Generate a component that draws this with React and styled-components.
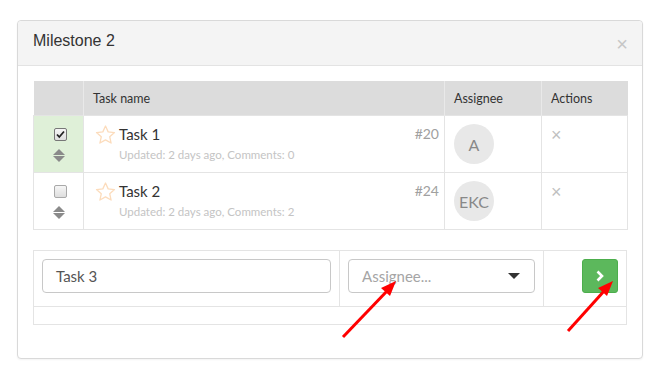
import React from 'react';
import styled, { createGlobalStyle } from 'styled-components';

const GlobalStyle = createGlobalStyle`
  body {
    margin: 0;
    background: #fff;
    font-family: Lato, "Open Sans", sans-serif;
    color: #333;
  }
`;

const Page = styled.div`
  position: relative;
  width: 661px;
  height: 386px;
  padding: 20px 0 0 17px;
  box-sizing: border-box;
`;

const Modal = styled.div`
  width: 626px;
  height: 339px;
  box-sizing: border-box;
  border: 1px solid #d9d9d9;
  border-radius: 4px;
  background: #fff;
  box-shadow: 0 1px 2px rgba(0, 0, 0, 0.05);
`;

const Header = styled.div`
  height: 45px;
  box-sizing: border-box;
  background: #f4f4f4;
  border-bottom: 1px solid #e3e3e3;
  border-radius: 4px 4px 0 0;
  display: flex;
  align-items: flex-start;
  justify-content: space-between;
  padding: 9px 14px 0 15px;
`;

const Title = styled.h4`
  margin: 0;
  font-family: "Liberation Sans", Arial, sans-serif;
  font-weight: normal;
  font-size: 16px;
  line-height: 22px;
  color: #333;
`;

const Close = styled.span`
  font-family: "Liberation Sans", Arial, sans-serif;
  font-size: 20px;
  line-height: 20px;
  margin-top: 4px;
  color: #c6c6c6;
`;

const Body = styled.div`
  padding: 15px 15px 0 15px;
`;

const Table = styled.table`
  width: 594px;
  table-layout: fixed;
  border-collapse: collapse;
  font-size: 12px;

  th {
    background: #dcdcdc;
    text-align: left;
    font-weight: normal;
    font-size: 12.5px;
    color: #333;
    height: 34px;
    padding: 0 9px;
    border-left: 1px solid #e9e9e9;
  }
  th:first-child {
    border-left: none;
  }
  td {
    border: 1px solid #e4e4e4;
    vertical-align: top;
    height: 57px;
    box-sizing: border-box;
  }
`;

const CheckCell = styled.td`
  background: ${(p) => (p.$done ? '#dff0d8' : '#fff')};
  padding-top: 12px;
`;

const Check = styled.div`
  width: 11px;
  height: 11px;
  margin-left: 19px;
  border: 1px solid ${(p) => (p.$on ? '#777' : '#a9a9a9')};
  border-radius: 2px;
  background: linear-gradient(#f6f6f6, #dedede);
  display: flex;
  align-items: center;
  justify-content: center;
`;

const Sorter = styled.div`
  display: flex;
  flex-direction: column;
  align-items: center;
  gap: 1px;
  margin-top: 8px;
`;

const NameCell = styled.td`
  padding: 8px 5px 0 10px;
`;

const NameRow = styled.div`
  display: flex;
  align-items: flex-start;
`;

const TaskInfo = styled.div`
  margin-left: 2px;
  flex: 1;
`;

const TaskTitle = styled.div`
  font-size: 15px;
  line-height: 18px;
  margin-top: 1px;
  color: #333;
`;

const Meta = styled.div`
  font-size: 11.5px;
  color: #c4c4c4;
  margin-top: 5px;
`;

const Num = styled.span`
  font-size: 14px;
  color: #a0a0a0;
  line-height: 16px;
  margin-top: 2px;
`;

const AssigneeCell = styled.td`
  padding: 8px 0 0 9px;
`;

const Avatar = styled.div`
  width: 40px;
  height: 40px;
  border-radius: 50%;
  background: #e8e8e8;
  color: #888;
  font-size: 16px;
  display: flex;
  align-items: center;
  justify-content: center;
`;

const ActionCell = styled.td`
  padding: 9px 0 0 9px;
`;

const Remove = styled.span`
  font-family: "Liberation Sans", Arial, sans-serif;
  font-size: 18px;
  color: #c0c0c0;
`;

const Form = styled.div`
  margin-top: 20px;
  width: 594px;
  border: 1px solid #e4e4e4;
  box-sizing: border-box;
`;

const FormRow = styled.div`
  display: grid;
  grid-template-columns: 305px 204px 1fr;
  height: 55px;
  border-bottom: 1px solid #e4e4e4;
`;

const FormCell = styled.div`
  display: flex;
  align-items: flex-start;
  padding: 8px 8px 0;
  border-left: ${(p) => (p.$first ? 'none' : '1px solid #e4e4e4')};
  justify-content: ${(p) => (p.$end ? 'flex-end' : 'flex-start')};
`;

const FormFoot = styled.div`
  height: 17px;
`;

const TextInput = styled.div`
  width: 100%;
  height: 34px;
  box-sizing: border-box;
  border: 1px solid #c8c8c8;
  border-radius: 4px;
  padding: 0 13px;
  display: flex;
  align-items: center;
  font-size: 15px;
  color: #555;
`;

const Select = styled(TextInput)`
  justify-content: space-between;
  color: #a5a5a5;
  padding: 0 14px 0 13px;
`;

const GoButton = styled.div`
  width: 36px;
  height: 34px;
  border-radius: 3px;
  background: #5cb85c;
  border: 1px solid #4cae4c;
  box-sizing: border-box;
  display: flex;
  align-items: center;
  justify-content: center;
`;

const Arrows = styled.svg`
  position: absolute;
  left: 0;
  top: 0;
  pointer-events: none;
`;

const Star = () => (
  <svg width="23" height="22" viewBox="0 0 24 24" style={{ flexShrink: 0 }}>
    <path
      d="M12 2.2l2.9 6.4 6.9.7-5.2 4.6 1.5 6.9L12 17.3l-6.1 3.5 1.5-6.9-5.2-4.6 6.9-.7z"
      fill="none"
      stroke="#fcdcbc"
      strokeWidth="1.4"
      strokeLinejoin="round"
    />
  </svg>
);

const SortIcon = () => (
  <>
    <svg width="12" height="6" viewBox="0 0 12 6">
      <path d="M6 0L12 6H0z" fill="#8a8a8a" />
    </svg>
    <svg width="12" height="6" viewBox="0 0 12 6">
      <path d="M0 0h12L6 6z" fill="#8a8a8a" />
    </svg>
  </>
);

const tasks = [
  { id: 20, name: 'Task 1', done: true, comments: 0, who: 'A' },
  { id: 24, name: 'Task 2', done: false, comments: 2, who: 'EKC' },
];

export default function App() {
  return (
    <Page>
      <GlobalStyle />
      <Modal>
        <Header>
          <Title>Milestone 2</Title>
          <Close>×</Close>
        </Header>
        <Body>
          <Table>
            <colgroup>
              <col style={{ width: 50 }} />
              <col style={{ width: 361 }} />
              <col style={{ width: 97 }} />
              <col style={{ width: 86 }} />
            </colgroup>
            <thead>
              <tr>
                <th></th>
                <th>Task name</th>
                <th>Assignee</th>
                <th>Actions</th>
              </tr>
            </thead>
            <tbody>
              {tasks.map((t) => (
                <tr key={t.id}>
                  <CheckCell $done={t.done}>
                    <Check $on={t.done}>
                      {t.done && (
                        <svg width="9" height="9" viewBox="0 0 9 9">
                          <path d="M1 4.5l2.3 2.5L8 1.5" fill="none" stroke="#222" strokeWidth="1.8" />
                        </svg>
                      )}
                    </Check>
                    <Sorter>
                      <SortIcon />
                    </Sorter>
                  </CheckCell>
                  <NameCell>
                    <NameRow>
                      <Star />
                      <TaskInfo>
                        <TaskTitle>{t.name}</TaskTitle>
                        <Meta>Updated: 2 days ago, Comments: {t.comments}</Meta>
                      </TaskInfo>
                      <Num>#{t.id}</Num>
                    </NameRow>
                  </NameCell>
                  <AssigneeCell>
                    <Avatar>{t.who}</Avatar>
                  </AssigneeCell>
                  <ActionCell>
                    <Remove>×</Remove>
                  </ActionCell>
                </tr>
              ))}
            </tbody>
          </Table>
          <Form>
            <FormRow>
              <FormCell $first>
                <TextInput>Task 3</TextInput>
              </FormCell>
              <FormCell>
                <Select>
                  Assignee...
                  <svg width="12" height="6" viewBox="0 0 12 6">
                    <path d="M0 0h12L6 6z" fill="#333" />
                  </svg>
                </Select>
              </FormCell>
              <FormCell $end>
                <GoButton>
                  <svg width="10" height="12" viewBox="0 0 10 12">
                    <path d="M2.5 1.5L7 6l-4.5 4.5" fill="none" stroke="#fff" strokeWidth="2.6" />
                  </svg>
                </GoButton>
              </FormCell>
            </FormRow>
            <FormFoot />
          </Form>
        </Body>
      </Modal>
      <Arrows width="661" height="386" viewBox="0 0 661 386">
        <line x1="343" y1="337" x2="388" y2="290" stroke="#ff0000" strokeWidth="3" />
        <path d="M396 281L381 288L390 296z" fill="#ff0000" />
        <line x1="568" y1="331" x2="605" y2="290" stroke="#ff0000" strokeWidth="3" />
        <path d="M613 281L598 288L607 296z" fill="#ff0000" />
      </Arrows>
    </Page>
  );
}
